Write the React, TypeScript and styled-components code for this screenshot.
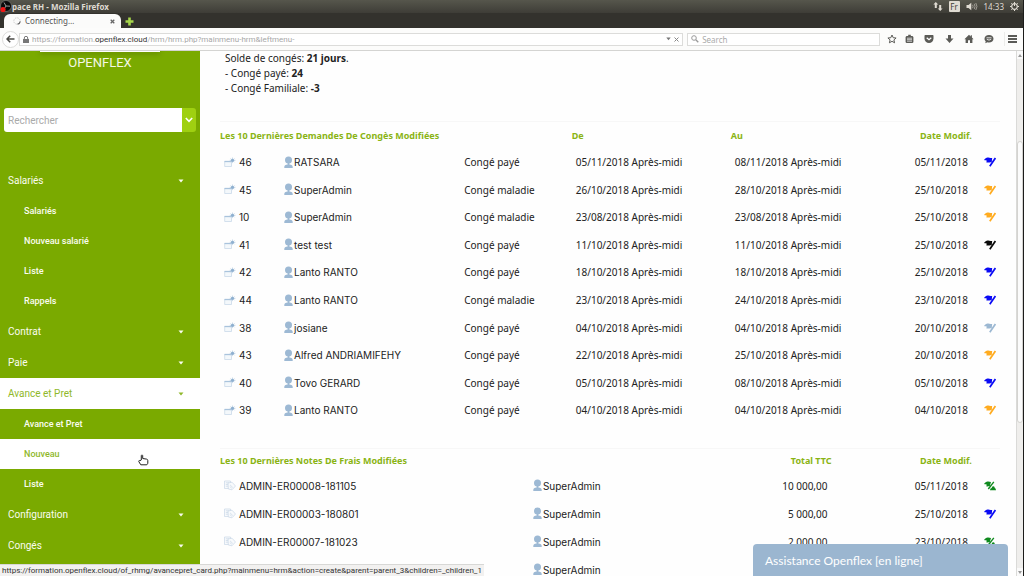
import React from "react";
import styled, { createGlobalStyle, css } from "styled-components";

const uiFont = `"Noto Sans", "Open Sans", sans-serif`;
const menuFont = `Roboto, sans-serif`;
const chatFont = `Lato, "Noto Sans", sans-serif`;
const linkFont = `Inter, Roboto, sans-serif`;
const green = "#7aaa00";
const headGreen = "#8ab414";
const paleBlue = "#9db9d4";

const GlobalStyle = createGlobalStyle`
  *, *::before, *::after { box-sizing: border-box; }
  html, body { margin: 0; height: 100%; overflow: hidden; background: #fff; }
  #root { height: 100%; }
  button, input { font: inherit; color: inherit; margin: 0; padding: 0; border: 0; background: none; }
  button { display: inline-flex; align-items: center; justify-content: center; }
  a { color: inherit; text-decoration: none; }
  ul { list-style: none; margin: 0; padding: 0; }
  svg { display: block; flex: none; }
`;

const Shell = styled.div`
  display: flex;
  flex-direction: column;
  height: 100%;
  border-right: 1px solid #1c1c1a;
  font-family: ${uiFont};
  font-size: 8px;
`;

const SystemBar = styled.header`
  flex: none;
  display: flex;
  align-items: center;
  height: 13px;
  padding-right: 4px;
  background: linear-gradient(#56564c, #3e3d37);
  color: #dfdbd2;
`;

const WindowTitle = styled.h1`
  flex: 1;
  display: flex;
  align-items: center;
  margin: 0;
  font-size: 8px;
  line-height: 12px;
  font-weight: 700;
`;

const Indicators = styled.div`
  display: flex;
  align-items: center;
  gap: 6px;
  line-height: 12px;
`;

const Lang = styled.span`
  width: 11px;
  height: 11px;
  border-radius: 1px;
  background: #dfdbd2;
  color: #3c3b37;
  line-height: 11px;
  text-align: center;
`;

const TabStrip = styled.div`
  flex: none;
  display: flex;
  align-items: flex-end;
  height: 15px;
  padding-left: 4px;
  background: #33322d;
`;

const Tab = styled.div`
  display: flex;
  align-items: center;
  gap: 4px;
  width: 117px;
  height: 14px;
  padding: 0 6px 0 9px;
  border-radius: 6px 6px 0 0;
  background: #fbfbfa;
  color: #555;
`;

const TabName = styled.span`
  flex: 1;
  line-height: 12px;
`;

const NewTab = styled.button`
  width: 16px;
  height: 14px;
`;

const NavBar = styled.nav`
  flex: none;
  display: flex;
  align-items: center;
  height: 23px;
  padding: 0 6px 0 2px;
  border-bottom: 1px solid #d4d4d2;
  background: #fcfcfb;
  color: #5b5b57;
`;

const BackButton = styled.button`
  flex: none;
  width: 17px;
  height: 17px;
  border: 1px solid #dcdcda;
  border-radius: 50%;
  background: #fff;
`;

const AddressBox = styled.div`
  flex: 1;
  display: flex;
  align-items: center;
  gap: 3px;
  height: 13px;
  padding: 0 3px;
  border: 1px solid #dcdcda;
  background: #fff;
`;

const Url = styled.div`
  flex: 1;
  overflow: hidden;
  font-family: ${menuFont};
  line-height: 11px;
  white-space: nowrap;
  color: #a8a8a8;

  b { font-weight: 400; color: #333; }
`;

const SearchBox = styled.label`
  display: flex;
  align-items: center;
  gap: 3px;
  width: 19%;
  height: 13px;
  margin: 0 7px 0 4px;
  padding-left: 3px;
  border: 1px solid #dcdcda;
  background: #fff;

  input { flex: 1; min-width: 0; height: 11px; outline: 0; }
  input::placeholder { color: #aaa; opacity: 1; }
`;

const Tools = styled.div`
  display: flex;
  align-items: center;
  gap: 10px;
`;

const ToolPair = styled.div`
  display: flex;
  gap: 7px;
`;

const MenuSlot = styled.div`
  display: flex;
  padding-left: 2px;
  border-left: 1px solid #ececea;
`;

const ToolButton = styled.button`
  width: 10px;
  height: 14px;
`;

const Page = styled.div`
  flex: 1;
  min-height: 0;
  display: flex;
`;

const Sidebar = styled.aside`
  flex: none;
  display: flex;
  flex-direction: column;
  align-items: stretch;
  width: 200px;
  overflow: hidden;
  background: ${green};
  color: #f4f8e6;
  font-family: ${menuFont};
`;

const LogoEdge = styled.div`
  flex: none;
  align-self: center;
  width: 120px;
  height: 1px;
  background: #fff;
  box-shadow: 0 1px 5px rgba(0, 0, 0, 0.6);
`;

const Brand = styled.h2`
  margin: 2px 0 0;
  font-size: 13px;
  line-height: 18px;
  font-weight: 400;
  text-align: center;
`;

const SideSearch = styled.form`
  display: flex;
  flex: none;
  height: 24px;
  margin: 36px 4px 33px;
  border-radius: 3px;
  overflow: hidden;
  font-size: 10px;

  input { flex: 1; min-width: 0; padding: 0 4px; background: #fff; color: #333; outline: 0; }
  input::placeholder { color: #aaa; opacity: 1; }
  button { width: 14px; background: #9fd011; }
`;

const menuRow = css<{ $active?: boolean }>`
  display: flex;
  align-items: center;
  background: ${(p) => (p.$active ? "#fff" : "transparent")};
  color: ${(p) => (p.$active ? "#8fb82a" : "#fafcf0")};
`;

const GroupButton = styled.button<{ $active?: boolean }>`
  && {
    ${menuRow}
    justify-content: space-between;
    width: 100%;
    height: 31px;
    padding: 0 16px 0 8px;
    font-size: 10px;
  }
`;

const SubLink = styled.a<{ $active?: boolean }>`
  ${menuRow}
  height: 30px;
  padding-left: 24px;
  font-size: 9px;
  font-weight: 500;
`;

const Main = styled.main`
  flex: 1;
  min-width: 0;
  overflow: hidden;
  padding: 0 16px 0 20px;
  background: #fefefe;
  color: #222;
  font-size: 10px;
`;

const Balance = styled.p`
  margin: 0 0 25px 5px;
  line-height: 15px;
`;

const DataTable = styled.table`
  width: 100%;
  table-layout: fixed;
  border-collapse: collapse;
  border-top: 1px solid #f7f7f7;

  th { height: 24px; }
`;

const LeaveTable = styled(DataTable)`
  height: 304px;
  margin-bottom: 23px;

  th { height: 28px; }
`;

const Th = styled.th<{ $end?: boolean }>`
  padding: 0;
  color: ${headGreen};
  font-size: 9px;
  line-height: 12px;
  font-weight: 700;
  text-align: ${(p) => (p.$end ? "right" : "left")};
  white-space: nowrap;
`;

const Td = styled.td<{ $end?: boolean }>`
  height: 27px;
  padding: 0 4px 2px;
  line-height: 14px;
  text-align: ${(p) => (p.$end ? "right" : "left")};
  vertical-align: middle;
  white-space: nowrap;

  > svg { margin-left: auto; }
`;

const ExpenseTd = styled(Td)`
  height: 28px;
`;

const IconLink = styled.a`
  display: flex;
  align-items: center;
  gap: 3px;
  font-family: ${linkFont};
  color: #222;
`;

const PersonLink = styled(IconLink)`
  gap: 1px;
`;

const Scrollbar = styled.div`
  flex: none;
  display: flex;
  flex-direction: column;
  align-items: center;
  width: 7px;
  border-left: 1px solid #dadad8;
  background: #efeeec;
`;

const ScrollTrack = styled.div`
  flex: 1;
  width: 100%;
  padding-top: 82px;
`;

const ScrollThumb = styled.div`
  height: 66%;
  border: 1px solid #d4d3d0;
  border-radius: 3px;
  background: #fbfbfb;
`;

const ScrollArrow = styled.button`
  width: 100%;
  height: 8px;
  background: #fafafa;
  color: #999;
`;

const StatusLine = styled.div`
  position: fixed;
  left: 0;
  bottom: 0;
  height: 12px;
  padding: 0 2px;
  background: #f2f1f0;
  border-top: 1px solid #d8d8d6;
  color: #333;
  font-family: ${menuFont};
  line-height: 12px;
  white-space: nowrap;
`;

const ChatButton = styled.button`
  && {
    position: fixed;
    right: 16px;
    bottom: 0;
    justify-content: flex-start;
    width: 255px;
    height: 32px;
    padding-left: 12px;
    border-radius: 4px 4px 0 0;
    background: #9bb6d0;
    color: #fff;
    font-family: ${chatFont};
    font-size: 12px;
  }
`;

const Pointer = styled.svg`
  position: fixed;
  left: 138px;
  top: 454px;
`;

const Caret = () => (
  <svg width="6" height="4" viewBox="0 0 6 4"><path d="M0.5 0.5h5L3 3.4z" fill="currentColor" /></svg>
);

const Person = () => (
  <svg width="9" height="13" viewBox="0 0 9 13" fill={paleBlue}>
    <circle cx="4.5" cy="4.100" r="3.5" />
    <path d="M3.600 7h1.800v1.400c2.200.2 3.300 1 3.300 2.600v1H.3v-1c0-1.600 1.100-2.400 3.300-2.600z" />
  </svg>
);

const Holiday = () => (
  <svg width="12" height="11" viewBox="0 0 12 11" fill="none" stroke="#a9c3dc">
    <path d="M.7 4.500h6.800v5H.7z" fill="#f4f8fb" stroke="#c9d9e8" strokeWidth=".8" />
    <path d="M.5 4.500h7" strokeWidth="1.300" />
    <path d="M8.500.5v5.600M5.700 3.300h5.800M6.500 1.300l4 4M10.500 1.300l-4 4" stroke="#b9cee2" strokeWidth=".7" />
    <circle cx="8.500" cy="3.300" r="1.600" fill="#8fb0d0" stroke="none" />
  </svg>
);

const Note = () => (
  <svg width="12" height="11" viewBox="0 0 12 11" fill="#f8fafc" stroke="#c8d7e6" strokeWidth=".7">
    <path d="M.5 1h6v7.500h-6zM1.800 2.800h3.500M1.800 4.500h3M1.800 6.200h3" />
    <path d="M4 3l4-.8L11.500 6 8 9.800 4.300 9z" />
    <path d="M6 4.800l2.800 2.700M5.800 6.500l2 1.800" />
  </svg>
);

const Flag = ({ color }: { color: string }) => (
  <svg width="12" height="10" viewBox="0 0 12 10">
    <path d="M0 2.900C1.200 1.200 2.800.2 4.200.6c1.200.4 2.300.4 4 .3L7.700 5.300C6.500 4.800 5 5.700 3 5.600L2.200 5.300 2.900 3.700C2.300 3.300 1 3.400 0 2.900z" fill={color} />
    <path d="M11.400 1L5.800 9.300" stroke={color} strokeWidth="1.700" />
  </svg>
);

const PaidFlag = () => (
  <svg width="12" height="10" viewBox="0 0 12 10" fill="#0f8a1e">
    <path d="M0 2.900C1.200 1.200 2.800.2 4.200.6l2.800.4L5.800 5C4.800 5.100 4 5.700 3 5.600L2.200 5.300 2.900 3.700C2.300 3.300 1 3.400 0 2.900z" />
    <path d="M9.800.9L4.300 8" stroke="#0f8a1e" strokeWidth="1.400" />
    <path d="M6 9.200c.2-1.500.9-2 1.700-2.200.2-1.300.8-1.800 1.700-1.800s1.300.7 1.300 1.800c.8.300 1.200 1.100 1.300 2.200z" />
  </svg>
);

const groups = [
  { name: "Salariés", items: ["Salariés", "Nouveau salarié", "Liste", "Rappels"] },
  { name: "Contrat", items: [] },
  { name: "Paie", items: [] },
  { name: "Avance et Pret", items: ["Avance et Pret", "Nouveau", "Liste"] },
  { name: "Configuration", items: [] },
  { name: "Congés", items: [] },
];

const blue = "#0a0af5";
const orange = "#ffab1f";

const leaves = [
  ["46", "RATSARA", "Congé payé", "05/11/2018", "08/11/2018", "05/11/2018", blue],
  ["45", "SuperAdmin", "Congé maladie", "26/10/2018", "28/10/2018", "25/10/2018", orange],
  ["10", "SuperAdmin", "Congé maladie", "23/08/2018", "23/08/2018", "25/10/2018", orange],
  ["41", "test test", "Congé payé", "11/10/2018", "11/10/2018", "25/10/2018", "#0a0a0a"],
  ["42", "Lanto RANTO", "Congé payé", "18/10/2018", "18/10/2018", "25/10/2018", blue],
  ["44", "Lanto RANTO", "Congé maladie", "23/10/2018", "24/10/2018", "23/10/2018", blue],
  ["38", "josiane", "Congé payé", "04/10/2018", "04/10/2018", "20/10/2018", "#9cb8d2"],
  ["43", "Alfred ANDRIAMIFEHY", "Congé payé", "22/10/2018", "25/10/2018", "20/10/2018", orange],
  ["40", "Tovo GERARD", "Congé payé", "05/10/2018", "08/10/2018", "05/10/2018", blue],
  ["39", "Lanto RANTO", "Congé payé", "04/10/2018", "04/10/2018", "04/10/2018", orange],
];

const expenses = [
  ["ADMIN-ER00008-181105", "10 000,00", "05/11/2018", "paid"],
  ["ADMIN-ER00003-180801", "5 000,00", "25/10/2018", blue],
  ["ADMIN-ER00007-181023", "2 000,00", "23/10/2018", "paid"],
  ["", "", "", "paid"],
];

const BrowserTools = () => (
  <Tools>
    <ToolPair>
      <ToolButton aria-label="Bookmark">
        <svg width="10" height="10" viewBox="0 0 10 10" fill="none" stroke="#5b5b57"><path d="M5 1l1.200 2.700 2.900.3-2.200 1.900.7 2.900L5 7.300 2.400 8.800l.7-2.900L.9 4l2.900-.3z" /></svg>
      </ToolButton>
      <ToolButton aria-label="Reading list">
        <svg width="9" height="10" viewBox="0 0 9 10" fill="#5b5b57"><path d="M1.500 2h1.700V.8h2.600V2h1.700l.9.9v5.300l-.9.900h-6l-.9-.9V2.900z" /><path d="M2 4.200h5M2 5.700h5M2 7.200h5" stroke="#fff" strokeWidth=".7" /></svg>
      </ToolButton>
    </ToolPair>
    <ToolButton aria-label="Pocket">
      <svg width="10" height="10" viewBox="0 0 10 10"><path d="M.5 2c0-.6.4-1 1-1h7c.6 0 1 .4 1 1v2.500a4.500 4.500 0 01-9 0z" fill="#5b5b57" /><path d="M2.700 3.700L5 5.800l2.300-2.100" fill="none" stroke="#fff" strokeWidth="1.200" /></svg>
    </ToolButton>
    <ToolButton aria-label="Downloads">
      <svg width="9" height="10" viewBox="0 0 9 10" fill="#5b5b57"><path d="M3 1h3v3.600h2.500L4.500 9 .5 4.600H3z" /></svg>
    </ToolButton>
    <ToolButton aria-label="Home">
      <svg width="10" height="10" viewBox="0 0 10 10" fill="#5b5b57"><path d="M5 .8l1.700 1.600V1.200h1.200v2.400L9.600 5.200H8.400V9H6V6.300H4V9H1.600V5.200H.4z" /></svg>
    </ToolButton>
    <ToolButton aria-label="Chat">
      <svg width="10" height="10" viewBox="0 0 10 10"><path d="M5 1c2.600 0 4.500 1.500 4.500 3.700S7.600 8.400 5 8.400c-.6 0-1 0-1.500-.2L1.300 9.200l.4-1.900C1 6.700.5 5.800.5 4.700.5 2.500 2.400 1 5 1z" fill="#5b5b57" /><path d="M2.500 3.800h5M2.800 5.300q2.200 1.600 4.400 0" fill="none" stroke="#fff" strokeWidth=".8" /></svg>
    </ToolButton>
    <MenuSlot>
      <ToolButton aria-label="Menu">
        <svg width="9" height="10" viewBox="0 0 9 10" stroke="#5b5b57" strokeWidth="1.800"><path d="M0 2h9M0 5h9M0 8h9" /></svg>
      </ToolButton>
    </MenuSlot>
  </Tools>
);

export default function App() {
  return (
    <Shell>
      <GlobalStyle />
      <SystemBar>
        <WindowTitle>
          <svg width="12" height="13" viewBox="0 0 12 13">
            <circle cx="6" cy="6" r="5.500" fill="#0a0a0a" stroke="#8a8a86" strokeWidth=".6" />
            <path d="M6 6L4 2.500M6 6l4 .2M6 6L3.800 9.500" stroke="#999" strokeWidth="1" />
            <circle cx="3" cy="9.500" r="2.600" fill="#f01818" />
          </svg>
          pace RH - Mozilla Firefox
        </WindowTitle>
        <Indicators>
          <svg width="10" height="9" viewBox="0 0 10 9" fill="#dfdbd2"><path d="M2.800 0l2.400 2.600H3.800V6H1.800V2.600H.4zM7.200 9L4.800 6.400h1.400V3h2v3.400h1.400z" /></svg>
          <Lang>Fr</Lang>
          <svg width="12" height="9" viewBox="0 0 12 9"><path d="M.5 3h2L5.300.7v7.600L2.500 6h-2z" fill="#dfdbd2" /><path d="M6.600 2.800q1 1.700 0 3.400M8.200 1.800q1.700 2.700 0 5.400M9.800 1q2.300 3.500 0 7" fill="none" stroke="#a9a69e" strokeWidth=".9" /></svg>
          <time>14:33</time>
          <svg width="9" height="9" viewBox="0 0 9 9" fill="none" stroke="#dfdbd2"><circle cx="4.500" cy="4.500" r="2.800" strokeWidth="1.200" /><path d="M4.500 0v4M0 4.500h1.300M7.700 4.500H9M1.300 1.300l1 1M6.700 6.700l1 1M1.300 7.700l1-1M7.700 1.300l-1 1M4.500 7.700V9" /></svg>
        </Indicators>
      </SystemBar>
      <TabStrip>
        <Tab>
          <svg width="8" height="8" viewBox="0 0 8 8" fill="none"><circle cx="4" cy="4" r="3.200" stroke="#ccc" strokeDasharray="1.500 1" /><path d="M7.200 4.500A3.200 3.200 0 014.500 7.200" stroke="#666" strokeWidth="1.300" /></svg>
          <TabName>Connecting…</TabName>
          <svg width="5" height="5" viewBox="0 0 5 5" stroke="#666" strokeWidth="1.300"><path d="M.7.7l3.600 3.600M4.300.7L.7 4.300" /></svg>
        </Tab>
        <NewTab aria-label="New tab">
          <svg width="9" height="9" viewBox="0 0 9 9" fill="#a6d64a"><path d="M3.200.5h2.600v2.700h2.700v2.600H5.800v2.700H3.200V5.800H.5V3.200h2.700z" /></svg>
        </NewTab>
      </TabStrip>
      <NavBar>
        <BackButton aria-label="Back">
          <svg width="9" height="8" viewBox="0 0 9 8" fill="none" stroke="#4a4a46" strokeWidth="1.500"><path d="M4.200.7L1 4l3.200 3.300M1 4h7.500" /></svg>
        </BackButton>
        <AddressBox>
          <svg width="6" height="7" viewBox="0 0 6 7"><path d="M0 3h6v4H0z" fill="#777" /><path d="M1.300 3V2a1.700 1.700 0 013.400 0v1" fill="none" stroke="#777" /></svg>
          <Url>https://formation.<b>openflex.cloud</b>/hrm/hrm.php?mainmenu-hrm&amp;leftmenu-</Url>
          <svg width="5" height="4" viewBox="0 0 5 4"><path d="M.3.5h4.400L2.500 3.300z" fill="#777" /></svg>
          <svg width="5" height="5" viewBox="0 0 5 5" stroke="#888"><path d="M.5.5l4 4M4.500.5l-4 4" /></svg>
        </AddressBox>
        <SearchBox>
          <svg width="8" height="8" viewBox="0 0 8 8" fill="none" stroke="#999"><circle cx="3" cy="3" r="2.300" /><path d="M4.800 4.800L7.300 7.300" strokeWidth="1.300" /></svg>
          <input aria-label="Search" placeholder="Search" />
        </SearchBox>
        <BrowserTools />
      </NavBar>
      <Page>
        <Sidebar>
          <LogoEdge />
          <Brand>OPENFLEX</Brand>
          <SideSearch>
            <input aria-label="Rechercher" placeholder="Rechercher" />
            <button type="button" aria-label="Options">
              <svg width="8" height="6" viewBox="0 0 8 6" fill="none" stroke="#fff" strokeWidth="1.600"><path d="M.8 1L4 4.300 7.200 1" /></svg>
            </button>
          </SideSearch>
          {groups.map((group) => {
            const open = group.name === "Avance et Pret";
            return (
              <section key={group.name}>
                <GroupButton $active={open}>
                  {group.name}
                  <Caret />
                </GroupButton>
                <ul>
                  {group.items.map((item) => (
                    <li key={item}>
                      <SubLink href="#" $active={item === "Nouveau"}>{item}</SubLink>
                    </li>
                  ))}
                </ul>
              </section>
            );
          })}
        </Sidebar>
        <Main>
          <Balance>
            Solde de congés: <b>21 jours</b>.<br />
            - Congé payé: <b>24</b><br />
            - Congé Familiale: <b>-3</b>
          </Balance>
          <LeaveTable>
            <colgroup>
              <col width="7.700%" /><col width="23.100%" /><col width="14.300%" /><col width="20.400%" />
              <col width="18.900%" /><col width="12%" /><col width="3.600%" />
            </colgroup>
            <thead>
              <tr>
                <Th colSpan={3}>Les 10 Dernières Demandes De Congès Modifiées</Th>
                <Th>De</Th>
                <Th>Au</Th>
                <Th $end>Date Modif.</Th>
                <Th />
              </tr>
            </thead>
            <tbody>
              {leaves.map(([id, name, kind, from, to, modified, color]) => (
                <tr key={id}>
                  <Td><IconLink href="#"><Holiday />{id}</IconLink></Td>
                  <Td><PersonLink href="#"><Person />{name}</PersonLink></Td>
                  <Td>{kind}</Td>
                  <Td>{from} Après-midi</Td>
                  <Td>{to} Après-midi</Td>
                  <Td $end>{modified}</Td>
                  <Td><Flag color={color} /></Td>
                </tr>
              ))}
            </tbody>
          </LeaveTable>
          <DataTable>
            <colgroup>
              <col width="39.600%" /><col width="15%" /><col width="23.800%" /><col width="18%" /><col width="3.600%" />
            </colgroup>
            <thead>
              <tr>
                <Th>Les 10 Dernières Notes De Frais Modifiées</Th>
                <Th />
                <Th $end>Total TTC</Th>
                <Th $end>Date Modif.</Th>
                <Th />
              </tr>
            </thead>
            <tbody>
              {expenses.map(([ref, total, modified, state], i) => (
                <tr key={i}>
                  <ExpenseTd><IconLink href="#"><Note />{ref}</IconLink></ExpenseTd>
                  <ExpenseTd><PersonLink href="#"><Person />SuperAdmin</PersonLink></ExpenseTd>
                  <ExpenseTd $end>{total}</ExpenseTd>
                  <ExpenseTd $end>{modified}</ExpenseTd>
                  <ExpenseTd>{state === "paid" ? <PaidFlag /> : <Flag color={state} />}</ExpenseTd>
                </tr>
              ))}
            </tbody>
          </DataTable>
        </Main>
        <Scrollbar>
          <ScrollArrow aria-label="Scroll up">
            <svg width="4" height="3" viewBox="0 0 4 3"><path d="M0 3h4L2 0z" fill="currentColor" /></svg>
          </ScrollArrow>
          <ScrollTrack><ScrollThumb /></ScrollTrack>
          <ScrollArrow aria-label="Scroll down">
            <svg width="4" height="3" viewBox="0 0 4 3"><path d="M0 0h4L2 3z" fill="currentColor" /></svg>
          </ScrollArrow>
        </Scrollbar>
      </Page>
      <StatusLine>
        https://formation.openflex.cloud/of_rhmg/avancepret_card.php?mainmenu=hrm&amp;action=create&amp;parent=parent_3&amp;children=_children_1
      </StatusLine>
      <ChatButton>Assistance Openflex [en ligne]</ChatButton>
      <Pointer width="11" height="12" viewBox="0 0 11 12" fill="#fff" stroke="#222" strokeWidth="1">
        <path d="M3.300 6V1.600c0-.8 1.400-.8 1.400 0V4.500l3.800.6c.8.200 1.300.6 1.300 1.400v2.800l-1 1.500H2.800L.8 7.600c-.3-.9.400-1.400 1.100-.9z" />
      </Pointer>
    </Shell>
  );
}
